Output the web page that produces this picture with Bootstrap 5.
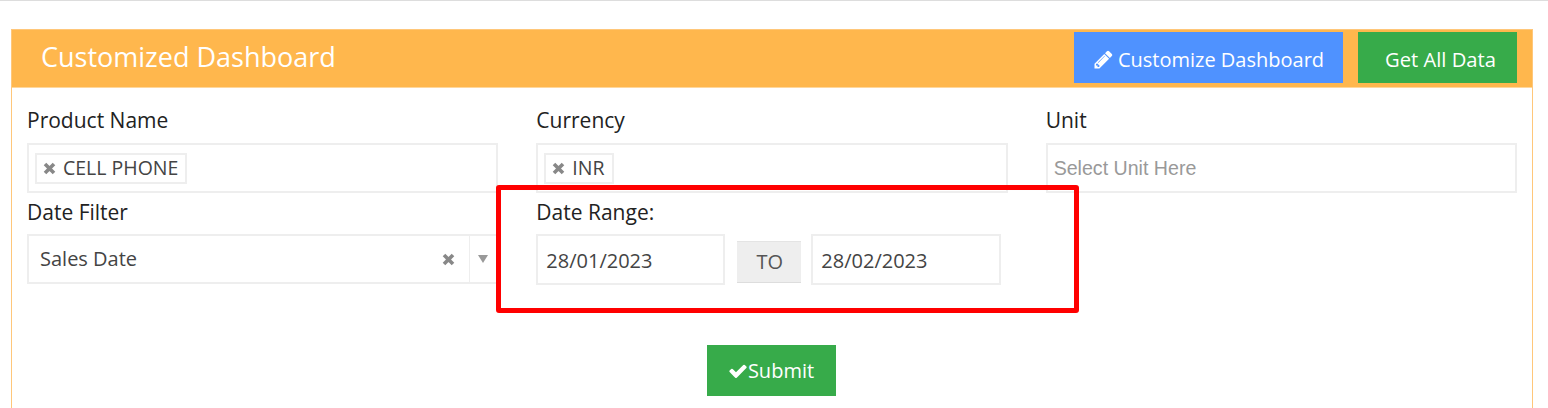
<!DOCTYPE html>
<html lang="en">
<head>
  <meta charset="utf-8">
  <meta name="viewport" content="width=device-width, initial-scale=1">
  <title>Customized Dashboard</title>
  <link href="https://cdn.jsdelivr.net/npm/bootstrap@5.3.3/dist/css/bootstrap.min.css" rel="stylesheet">
  <style>
    html, body { height: 408px; overflow: hidden; }
    body {
      background: #fff;
      border-top: 1px solid #ddd;
      font-family: "Open Sans", sans-serif;
      font-size: 20px;
      color: #222;
      padding: 28px 15px 0 11px;
      position: relative;
    }
    .dash-panel { border: 1px solid #ffc77a; border-bottom: 0; height: 400px; }
    .dash-head {
      background: #ffb74d;
      height: 58px;
      padding: 2px 15px 4px 29px;
      border-bottom: 1px solid #ffd79c;
    }
    .dash-title { color: #fff; font-size: 27px; font-weight: 400; margin: 0 0 2px; line-height: 1; }
    .dash-btn {
      font-size: 20px;
      line-height: 1.2;
      color: #fff;
      border: 0;
      border-radius: 0;
      height: 51px;
      padding-top: 4px;
      padding-bottom: 0;
    }
    .btn-cust { background: #4f92ff; width: 269px; margin-right: 15px; }
    .btn-all { background: #37ab4a; width: 159px; font-size: 20.2px; padding-left: 18px; padding-right: 12px; }
    .btn-go { background: #37ab4a; width: 129px; padding: 0; margin-right: 2px; }
    .dash-btn:hover { color: #fff; }
    .dash-body { padding: 19px 15px 0; }
    .field-row { --bs-gutter-x: 38px; --bs-gutter-y: 0; }
    .field-label { font-size: 21px; line-height: 27px; margin-bottom: 9px; color: #222; display: block; }
    .row-second .field-label { margin-bottom: 8px; }
    .field-box {
      height: 50px;
      border: 2px solid #eee;
      border-radius: 0;
      font-size: 20px;
      color: #444;
      background: #fff;
      box-shadow: none;
    }
    .box-tags { padding: 8px 6px; margin-bottom: 6px; }
    .tag-item {
      border: 2px solid #eee;
      height: 31px;
      padding: 0 7px 0 6px;
      gap: 7px;
      font-size: 19.5px;
      color: #444;
    }
    .box-plain {
      margin-bottom: 6px;
      padding: 0 6px;
      font-family: "Liberation Sans", sans-serif;
      font-size: 19.6px;
    }
    .box-plain::placeholder { color: #999; opacity: 1; }
    .box-select { padding-left: 11px; height: 50px; }
    .sel-clear { margin-left: auto; margin-right: 14px; }
    .sel-arrow {
      border-left: 1px solid #eee;
      align-self: stretch;
      width: 27px;
    }
    .sel-tri { border: 5px solid transparent; border-top: 8px solid #999; border-bottom: 0; }
    .date-box { width: 189px; height: 51px; padding: 2px 8px 0; font-size: 20px; }
    .date-end { width: 190px; }
    .date-to {
      width: 64px;
      height: 42px;
      margin: 7px 10px 0 12px;
      padding-left: 1px;
      background: #eee;
      border-top: 1px solid #e4e4e4;
      border-bottom: 1px solid #ddd;
      font-size: 20px;
      color: #555;
    }
    .submit-wrap { margin-top: 60px; }
    .red-mark {
      position: absolute;
      left: 496px;
      top: 184px;
      width: 583px;
      height: 128px;
      border: 5px solid #f00;
      border-radius: 3px;
      pointer-events: none;
    }
  </style>
</head>
<body>

<div class="dash-panel">
  <div class="dash-head d-flex align-items-center justify-content-between">
    <h4 class="dash-title">Customized Dashboard</h4>
    <div class="d-flex">
      <button type="button" class="btn dash-btn btn-cust d-flex align-items-center justify-content-center gap-1">
        <svg width="21" height="21" viewBox="0 0 1792 1792" fill="#fff"><path d="M491 1536l91-91-235-235-91 91v107h128v128h107zm523-928q0-22-22-22-10 0-17 7l-542 542q-7 7-7 17 0 22 22 22 10 0 17-7l542-542q7-7 7-17zm-54-192l416 416-832 832h-416v-416zm683 96q0 53-37 90l-166 166-416-416 166-165q36-38 90-38 53 0 91 38l235 234q37 39 37 91z"/></svg>
        Customize Dashboard
      </button>
      <button type="button" class="btn dash-btn btn-all">Get All Data</button>
    </div>
  </div>

  <div class="dash-body">
    <div class="row field-row">
      <div class="col-4">
        <label class="field-label">Product Name</label>
        <div class="field-box box-tags d-flex align-items-center">
          <span class="tag-item d-inline-flex align-items-center">
            <svg width="13" height="13" viewBox="0 0 13 13"><path d="M2 2l9 9M11 2l-9 9" stroke="#888" stroke-width="3.6"/></svg>
            CELL PHONE
          </span>
        </div>
      </div>
      <div class="col-4">
        <label class="field-label">Currency</label>
        <div class="field-box box-tags d-flex align-items-center">
          <span class="tag-item d-inline-flex align-items-center">
            <svg width="13" height="13" viewBox="0 0 13 13"><path d="M2 2l9 9M11 2l-9 9" stroke="#888" stroke-width="3.6"/></svg>
            INR
          </span>
        </div>
      </div>
      <div class="col-4">
        <label class="field-label">Unit</label>
        <input type="text" class="form-control field-box box-plain" placeholder="Select Unit Here">
      </div>
    </div>

    <div class="row field-row row-second">
      <div class="col-4">
        <label class="field-label">Date Filter</label>
        <div class="field-box box-select d-flex align-items-center">
          <span>Sales Date</span>
          <svg class="sel-clear" width="13" height="13" viewBox="0 0 13 13"><path d="M2 2l9 9M11 2l-9 9" stroke="#888" stroke-width="3.6"/></svg>
          <span class="sel-arrow d-flex align-items-center justify-content-center"><span class="sel-tri"></span></span>
        </div>
      </div>
      <div class="col-8">
        <label class="field-label">Date Range:</label>
        <div class="d-flex align-items-start">
          <input type="text" class="form-control field-box date-box" value="28/01/2023">
          <span class="date-to d-flex align-items-center justify-content-center">TO</span>
          <input type="text" class="form-control field-box date-box date-end" value="28/02/2023">
        </div>
      </div>
    </div>

    <div class="submit-wrap d-flex justify-content-center">
      <button type="button" class="btn dash-btn btn-go d-flex align-items-center justify-content-center">
        <svg width="20" height="20" viewBox="0 0 1792 1792" fill="#fff"><path d="M1671 566q0 40-28 68l-724 724-136 136q-28 28-68 28t-68-28l-136-136-362-362q-28-28-28-68t28-68l136-136q28-28 68-28t68 28l294 295 656-657q28-28 68-28t68 28l136 136q28 28 28 68z"/></svg>Submit
      </button>
    </div>
  </div>
</div>

<div class="red-mark"></div>

<script src="https://cdn.jsdelivr.net/npm/bootstrap@5.3.3/dist/js/bootstrap.bundle.min.js"></script>
</body>
</html>
